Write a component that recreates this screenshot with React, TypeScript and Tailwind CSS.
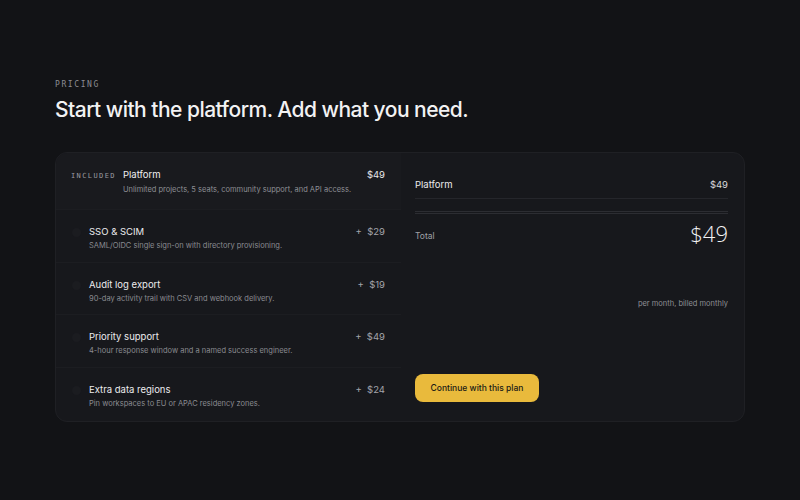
import React from 'react';

type Addon = { name: string; desc: string; price: number };

const addons: Addon[] = [
    { name: 'SSO & SCIM', desc: 'SAML/OIDC single sign-on with directory provisioning.', price: 29 },
    { name: 'Audit log export', desc: '90-day activity trail with CSV and webhook delivery.', price: 19 },
    { name: 'Priority support', desc: '4-hour response window and a named success engineer.', price: 49 },
    { name: 'Extra data regions', desc: 'Pin workspaces to EU or APAC residency zones.', price: 24 },
];

const App: React.FC = () => {
    return (
        <div className="min-h-[500px] w-full bg-[#121316] px-[55px] pt-[79px] font-['Inter',sans-serif] text-white">
            <div className="font-['DejaVu_Sans_Mono',monospace] text-[8px] leading-[12px] tracking-[0.2em] text-[#8b8c92]">
                PRICING
            </div>
            <h1 className="mt-[6px] text-[21px] font-medium leading-[26px] tracking-[-0.025em] text-[#f2f2f3]">
                Start with the platform. Add what you need.
            </h1>

            <div className="mt-[29px] flex h-[270px] overflow-hidden rounded-xl border border-[#1f2024] bg-[#17181c]">
                {/* add-ons list */}
                <div className="flex w-[345px] flex-col">
                    <div className="flex h-[57px] border-b border-[#1c1d21] bg-[#191a1e] pl-[15px] pr-4 pt-4">
                        <span className="w-[52px] pt-[1px] font-['DejaVu_Sans_Mono',monospace] text-[7px] leading-[12px] tracking-[0.2em] text-[#9a9ba1]">
                            INCLUDED
                        </span>
                        <div className="flex-1">
                            <div className="flex justify-between text-[9.5px] leading-[12px]">
                                <span className="text-[#f0f0f2]">Platform</span>
                                <span className="text-[#e8e8ea]">$49</span>
                            </div>
                            <div className="mt-[3px] text-[7.5px] leading-[12px] text-[#8e8f95]">
                                Unlimited projects, 5 seats, community support, and API access.
                            </div>
                        </div>
                    </div>
                    {addons.map((a) => (
                        <div key={a.name} className="flex h-[53px] border-b border-[#1c1d21] pl-[16px] pr-4 pt-4 last:border-b-0">
                            <span className="mt-[2px] mr-[8px] h-[9px] w-[9px] rounded-full bg-[#1b1c20]" />
                            <div className="flex-1">
                                <div className="flex justify-between text-[9.5px] leading-[12px]">
                                    <span className="text-[#ececee]">{a.name}</span>
                                    <span className="text-[#a3a4aa]">
                                        + &nbsp;${a.price}
                                    </span>
                                </div>
                                <div className="mt-[2px] text-[7.5px] leading-[12px] text-[#8a8b91]">{a.desc}</div>
                            </div>
                        </div>
                    ))}
                </div>

                {/* summary */}
                <div className="flex flex-1 flex-col pl-[14px] pr-4 pb-[19px] pt-[14px]">
                    <div className="flex justify-between border-b border-[#25262b] pb-[7px] pt-3 text-[9.5px] leading-[12px]">
                        <span className="text-[#ececee]">Platform</span>
                        <span className="text-[#d8d8db]">$49</span>
                    </div>
                    <div className="mt-[12px] border-t-[3px] border-double border-[#2c2d32]" />
                    <div className="mt-[6px] flex items-center justify-between">
                        <span className="mt-[6px] text-[8.5px] text-[#a0a1a7]">Total</span>
                        <span className="font-['Open_Sans',sans-serif] text-[22px] font-light leading-[26px] text-[#f2f2f3]">
                            $49
                        </span>
                    </div>
                    <div className="mt-[52px] text-right text-[7.5px] leading-[12px] text-[#8e8f95]">per month, billed monthly</div>
                    <button className="mt-auto h-[28px] w-[124px] rounded-lg bg-[#e9ba3c] text-[8.5px] font-medium text-[#1b1a16]">
                        Continue with this plan
                    </button>
                </div>
            </div>
        </div>
    );
};

export default App;
